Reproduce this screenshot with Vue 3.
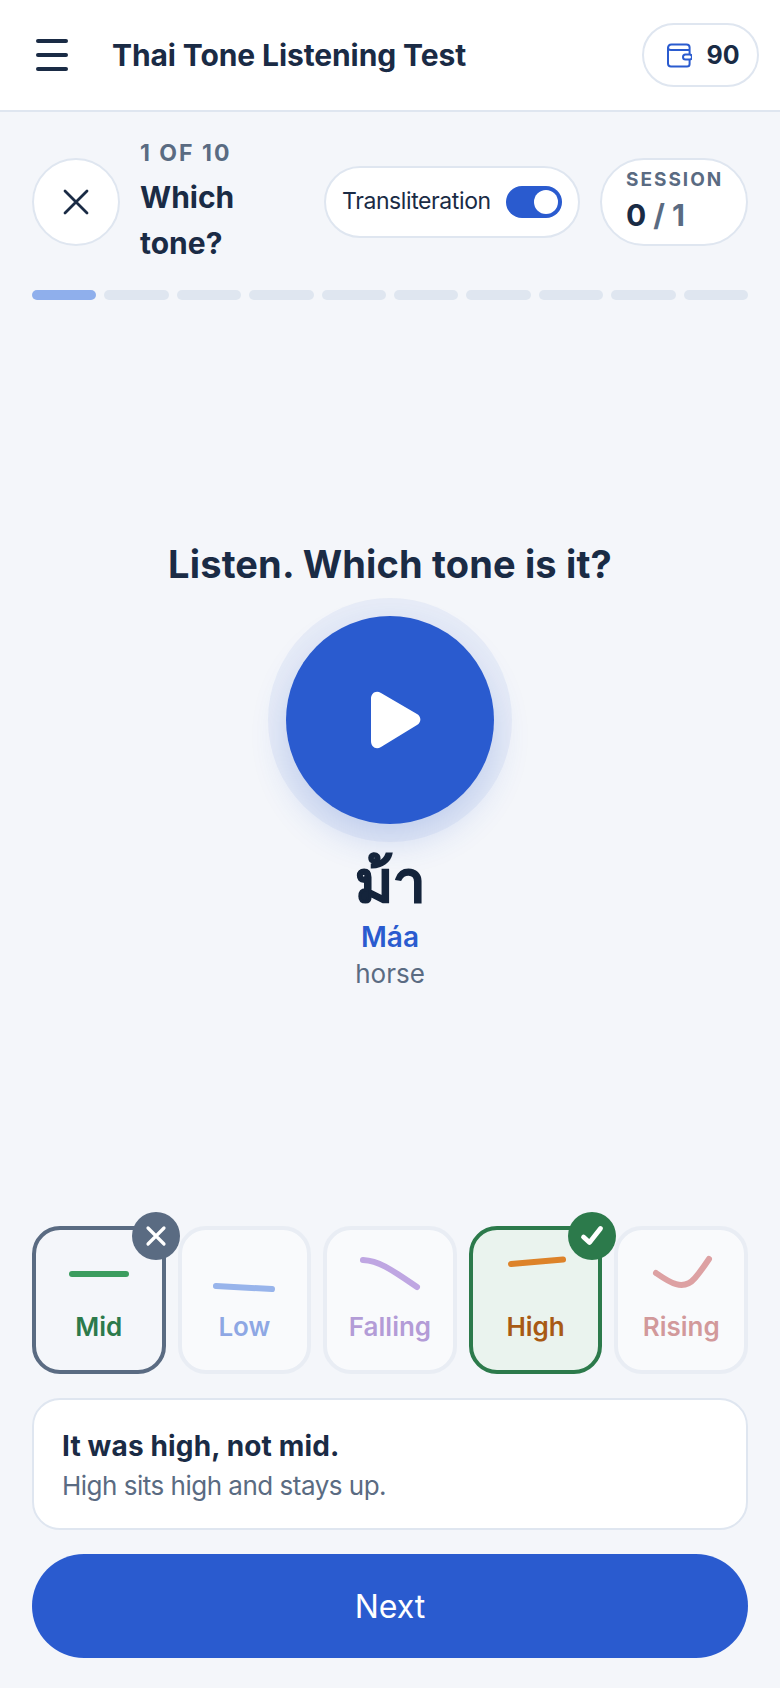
<template>
  <div class="page">
    <header class="topbar">
      <button class="menu-btn" aria-label="Menu">
        <span></span><span></span><span></span>
      </button>
      <h1 class="app-title">Thai Tone Listening Test</h1>
      <div class="balance">
        <svg width="26" height="26" viewBox="0 0 26 26" fill="none" stroke="#2a5bcf" stroke-width="2" stroke-linejoin="round" stroke-linecap="round">
          <path d="M2 6.5C2 4 3.2 2.5 5.5 2.5H20.5C22.5 2.5 23.6 3.8 23.6 5.5V8H5C3.3 8 2 7.2 2 5.5V21.5C2 23.3 3.2 24.5 5 24.5H21C22.6 24.5 23.6 23.4 23.6 22V8" />
          <rect x="17" y="12.6" width="9" height="5" rx="2.5" fill="#fff" />
        </svg>
        <span>{{ balance }}</span>
      </div>
    </header>

    <section class="quiz-head">
      <button class="close-btn" aria-label="Close">
        <svg width="26" height="26" viewBox="0 0 26 26" fill="none" stroke="#1a2b45" stroke-width="2.800" stroke-linecap="round">
          <path d="M2 2L24 24M24 2L2 24" />
        </svg>
      </button>
      <div class="quiz-title">
        <div class="counter">1 OF 10</div>
        <div class="title">Which tone?</div>
      </div>
      <div class="translit">
        <span>Transliteration</span>
        <span class="switch"><i></i></span>
      </div>
      <div class="session">
        <div class="session-label">SESSION</div>
        <div class="session-score">0 <em>/ 1</em></div>
      </div>
    </section>

    <div class="progress">
      <span v-for="n in 10" :key="n" :class="{ active: n === 1 }"></span>
    </div>

    <main class="prompt">
      <h2>Listen. Which tone is it?</h2>
      <button class="play" aria-label="Play">
        <svg width="52" height="58" viewBox="0 0 52 58">
          <path d="M1 8C1 2 6 -1 11 2L47 23C51.500 25.500 51.500 31.500 47 34L11 56C6 59 1 56 1 50Z" fill="#fff" />
        </svg>
      </button>
      <div class="thai">ม้า</div>
      <div class="roman">Máa</div>
      <div class="meaning">horse</div>
    </main>

    <div class="tones">
      <div v-for="tone in tones" :key="tone.name" class="tone" :class="tone.state">
        <span v-if="tone.state === 'wrong'" class="badge">
          <svg width="22" height="22" viewBox="0 0 22 22" fill="none" stroke="#fff" stroke-width="3.200" stroke-linecap="round">
            <path d="M3 3L19 19M19 3L3 19" />
          </svg>
        </span>
        <span v-if="tone.state === 'right'" class="badge">
          <svg width="24" height="22" viewBox="0 0 24 22" fill="none" stroke="#fff" stroke-width="4.800" stroke-linecap="round" stroke-linejoin="round">
            <path d="M3.500 12L9.500 17.500L20.500 3.500" />
          </svg>
        </span>
        <svg class="contour" width="64" height="48" viewBox="0 0 64 48" fill="none" stroke-width="6" stroke-linecap="round">
          <path :d="tone.path" :stroke="tone.line" />
        </svg>
        <span class="tone-name" :style="{ color: tone.color }">{{ tone.name }}</span>
      </div>
    </div>

    <div class="feedback">
      <strong>It was high, not mid.</strong>
      <p>High sits high and stays up.</p>
    </div>

    <button class="next">Next</button>
  </div>
</template>

<script setup>
import { ref } from 'vue'

const balance = ref(90)

const tones = [
  { name: 'Mid', state: 'wrong', line: '#3c9d5f', color: '#2c7a4b', path: 'M5 20H59' },
  { name: 'Low', state: 'muted', line: '#3f74dd', color: '#2a5bcf', path: 'M4 32L60 35' },
  { name: 'Falling', state: 'muted', line: '#8b58cc', color: '#7445b5', path: 'M5 6C22 7 34 16 59 33' },
  { name: 'High', state: 'right', line: '#dd8229', color: '#a85a14', path: 'M7 10L59 5.500' },
  { name: 'Rising', state: 'muted', line: '#c84f4f', color: '#b23f3f', path: 'M7 19C20 28 34 38 46 24C52 17 56 11 60 5' }
]
</script>

<style>
html,
body {
  background: #f4f6fa;
}
</style>

<style scoped>
.page {
  width: 780px;
  height: 1688px;
  box-sizing: border-box;
  display: flex;
  flex-direction: column;
  background: #f4f6fa;
  color: #1a2b45;
  font-family: Inter, "Noto Sans", sans-serif;
  padding-bottom: 30px;
}

button {
  border: none;
  background: none;
  padding: 0;
  font-family: inherit;
}

.topbar {
  height: 112px;
  box-sizing: border-box;
  flex-shrink: 0;
  display: flex;
  align-items: center;
  background: #fff;
  border-bottom: 2px solid #dfe6f0;
  padding: 0 21px 0 36px;
}

.menu-btn {
  width: 32px;
  display: flex;
  flex-direction: column;
  gap: 10px;
  margin-top: -1px;
}

.menu-btn span {
  display: block;
  height: 4px;
  border-radius: 2px;
  background: #1a2b45;
}

.app-title {
  margin: 0 0 0 44px;
  flex: 1;
  font-size: 30px;
  font-weight: 700;
  letter-spacing: -0.1px;
}

.balance {
  width: 117px;
  height: 64px;
  box-sizing: border-box;
  display: flex;
  align-items: center;
  justify-content: center;
  gap: 14px;
  padding-left: 5px;
  border: 2px solid #dfe6f0;
  border-radius: 32px;
  font-size: 25px;
  font-weight: 700;
  margin-top: -1px;
}

.quiz-head {
  display: flex;
  align-items: center;
  padding: 22px 32px 0;
  height: 158px;
  box-sizing: border-box;
  flex-shrink: 0;
}

.close-btn {
  width: 88px;
  height: 88px;
  box-sizing: border-box;
  border: 2px solid #dfe6f0;
  border-radius: 50%;
  background: #fff;
  display: flex;
  align-items: center;
  justify-content: center;
  flex-shrink: 0;
}

.quiz-title {
  width: 160px;
  margin-left: 20px;
  flex-shrink: 0;
}

.counter {
  font-size: 23px;
  font-weight: 700;
  color: #5a6b82;
  letter-spacing: 2px;
  line-height: 30px;
}

.title {
  font-size: 30px;
  font-weight: 700;
  line-height: 46px;
  width: 120px;
  margin-top: 6px;
}

.translit {
  width: 256px;
  height: 72px;
  box-sizing: border-box;
  margin-left: 24px;
  display: flex;
  align-items: center;
  justify-content: space-between;
  padding: 0 16px 0 16px;
  background: #fff;
  border: 2px solid #dfe6f0;
  border-radius: 36px;
  font-size: 23px;
  letter-spacing: -0.4px;
}

.translit span:first-child {
  margin-top: -2px;
}

.switch {
  width: 56px;
  height: 32px;
  box-sizing: border-box;
  display: flex;
  align-items: center;
  justify-content: flex-end;
  padding-right: 4px;
  background: #2a5bcf;
  border-radius: 16px;
}

.switch i {
  width: 24px;
  height: 24px;
  border-radius: 50%;
  background: #fff;
}

.session {
  width: 148px;
  height: 88px;
  box-sizing: border-box;
  margin-left: 20px;
  padding: 7px 24px 0;
  background: #fff;
  border: 2px solid #dfe6f0;
  border-radius: 44px;
}

.session-label {
  font-size: 19px;
  font-weight: 700;
  color: #5a6b82;
  letter-spacing: 2px;
  line-height: 26px;
}

.session-score {
  font-size: 30px;
  font-weight: 700;
  line-height: 38px;
  margin-top: 3px;
}

.session-score em {
  font-style: normal;
  color: #5a6b82;
}

.progress {
  display: grid;
  grid-template-columns: repeat(10, 1fr);
  gap: 8px;
  margin: 20px 32px 0;
  height: 10px;
  flex-shrink: 0;
}

.progress span {
  border-radius: 5px;
  background: #dfe6f0;
}

.progress .active {
  background: #8fafec;
}

.prompt {
  flex: 1;
  display: flex;
  flex-direction: column;
  align-items: center;
  padding-top: 240px;
}

.prompt h2 {
  margin: 0;
  font-size: 38px;
  font-weight: 700;
  line-height: 48px;
  letter-spacing: 0.15px;
}

.play {
  width: 208px;
  height: 208px;
  margin-top: 28px;
  border-radius: 50%;
  background: #2a5bcf;
  box-shadow: 0 0 0 18px rgba(42, 91, 207, 0.06), 0 16px 36px rgba(42, 91, 207, 0.2);
  display: flex;
  align-items: center;
  justify-content: center;
  padding-left: 12px;
}

.thai {
  margin-top: 20px;
  font-size: 58px;
  font-weight: 700;
  line-height: 75px;
  color: #14243b;
  -webkit-text-stroke: 1.2px #14243b;
}

.roman {
  font-size: 28px;
  font-weight: 600;
  line-height: 36px;
  color: #2a5bcf;
}

.meaning {
  font-size: 26px;
  line-height: 38px;
  color: #5a6b82;
}

.tones {
  display: grid;
  grid-template-columns: repeat(5, 1fr);
  gap: 12px;
  margin: 0 32px;
  flex-shrink: 0;
}

.tone {
  position: relative;
  height: 148px;
  box-sizing: border-box;
  border: 4px solid #dfe6f0;
  border-radius: 28px;
  display: flex;
  flex-direction: column;
  align-items: center;
  padding-top: 24px;
}

.tone.muted {
  background: #fff;
  opacity: 0.5;
}

.tone.wrong {
  border-color: #5a6b82;
}

.tone.right {
  border-color: #2c7a4b;
  background: #eaf3ee;
}

.contour {
  display: block;
}

.tone-name {
  margin-top: 8px;
  font-size: 26px;
  font-weight: 600;
  line-height: 34px;
}

.badge {
  position: absolute;
  top: -18px;
  right: -18px;
  width: 48px;
  height: 48px;
  border-radius: 50%;
  display: flex;
  align-items: center;
  justify-content: center;
}

.wrong .badge {
  background: #5a6b82;
}

.right .badge {
  background: #2c7a4b;
}

.feedback {
  height: 132px;
  box-sizing: border-box;
  flex-shrink: 0;
  margin: 24px 32px 0;
  padding: 27px 28px 0;
  background: #fff;
  border: 2px solid #dfe6f0;
  border-radius: 28px;
}

.feedback strong {
  display: block;
  font-size: 28px;
  font-weight: 700;
  line-height: 38px;
  letter-spacing: 0.15px;
}

.feedback p {
  margin: 4px 0 0;
  font-size: 26px;
  line-height: 34px;
  color: #5a6b82;
  letter-spacing: -0.5px;
}

.next {
  height: 104px;
  flex-shrink: 0;
  margin: 24px 32px 0;
  border-radius: 52px;
  background: #2a5bcf;
  color: #fff;
  font-size: 32px;
  font-weight: 400;
}
</style>
